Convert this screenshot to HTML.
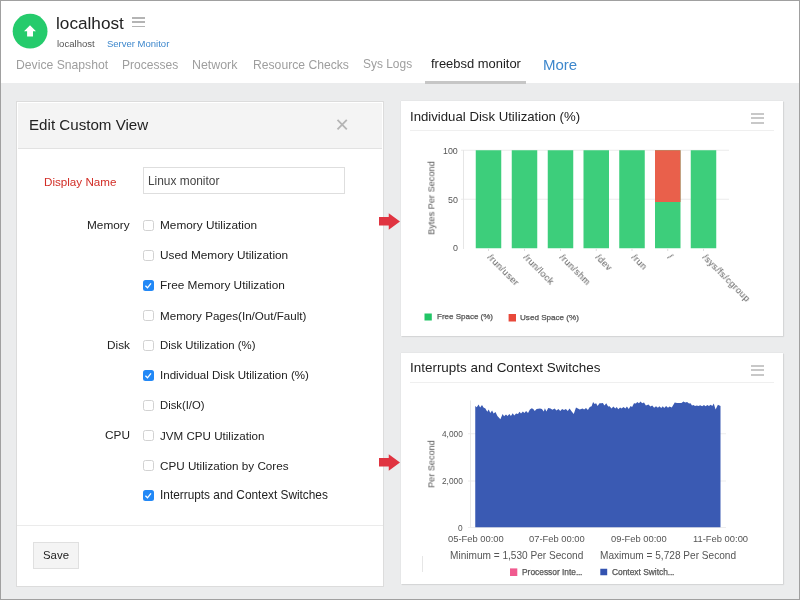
<!DOCTYPE html>
<html><head><meta charset="utf-8">
<style>
*{margin:0;padding:0;box-sizing:border-box}
html,body{width:800px;height:600px;overflow:hidden;background:#fff}
body{position:relative;font-family:"Liberation Sans",sans-serif;color:#222}
.a{position:absolute;white-space:nowrap}
.t{position:absolute;white-space:nowrap;line-height:1;will-change:transform}
#frame{position:absolute;left:0;top:0;width:800px;height:600px;border:1px solid #a0a0a0;z-index:50;pointer-events:none}
#bg{position:absolute;left:0;top:83px;width:800px;height:517px;background:#ebeced}
.cb{position:absolute;left:143px;width:11px;height:11px;border:1px solid #d2d2d2;border-radius:2.5px;background:#fff}
.cb.on{background:#2a8bf2;border-color:#2a8bf2}
.lbl{position:absolute;font-size:11.8px;line-height:1;color:#222;white-space:nowrap;will-change:transform}
</style></head><body>
<div id="frame"></div>
<!-- header -->
<svg class="a" style="left:0;top:0" width="60" height="60">
 <circle cx="30.1" cy="31.2" r="17.4" fill="#25cb6c"/>
 <path d="M30 25.2 L36 31.2 L33 31.2 L33 36.6 L27.1 36.6 L27.1 31.2 L24 31.2 Z" fill="#fff"/>
</svg>
<div class="t" style="left:56.3px;top:14.6px;font-size:17.2px;color:#222">localhost</div>
<div class="a" style="left:132px;top:17px;width:12.6px;height:1.6px;background:#b4b4b4"></div>
<div class="a" style="left:132px;top:21.2px;width:12.6px;height:1.6px;background:#b4b4b4"></div>
<div class="a" style="left:132px;top:25.5px;width:12.6px;height:1.6px;background:#b4b4b4"></div>
<div class="t" style="left:56.5px;top:38.9px;font-size:9.55px;color:#555">localhost</div>
<div class="t" style="left:106.5px;top:38.9px;font-size:9.5px;color:#3d87cc">Server Monitor</div>
<div class="t" style="left:16px;top:58.9px;font-size:12.2px;color:#9e9e9e">Device Snapshot</div>
<div class="t" style="left:121.6px;top:58.9px;font-size:12.05px;color:#9e9e9e">Processes</div>
<div class="t" style="left:192.3px;top:58.9px;font-size:12.4px;color:#9e9e9e">Network</div>
<div class="t" style="left:252.6px;top:58.9px;font-size:12.16px;color:#9e9e9e">Resource Checks</div>
<div class="t" style="left:363px;top:58.9px;font-size:11.95px;color:#9e9e9e">Sys Logs</div>
<div class="t" style="left:430.7px;top:58.2px;font-size:12.95px;color:#222">freebsd monitor</div>
<div class="t" style="left:542.6px;top:57.3px;font-size:15px;color:#3d87cc">More</div>
<div class="a" style="left:425px;top:81px;width:101px;height:3px;background:#c6c6c6;z-index:2"></div>
<div id="bg"></div>

<!-- left panel -->
<div class="a" style="left:16px;top:101px;width:368px;height:486px;background:#fff;border:1px solid #dcdcdc"></div>
<div class="a" style="left:18px;top:103px;width:364px;height:46px;background:#f4f4f4;border-bottom:1px solid #e2e2e2"></div>
<div class="t" style="left:28.6px;top:117.3px;font-size:15.15px;color:#222">Edit Custom View</div>
<svg class="a" style="left:330px;top:112px" width="24" height="24"><path d="M7.5 7.9 L16.8 17.3 M16.8 7.9 L7.5 17.3" stroke="#b5b5b5" stroke-width="1.8"/></svg>
<div class="t" style="left:44.2px;top:176px;font-size:11.65px;color:#d22d26">Display Name</div>
<div class="a" style="left:143px;top:167px;width:202px;height:27px;border:1px solid #dedede;background:#fff"></div>
<div class="t" style="left:147.8px;top:176px;font-size:11.9px;color:#444">Linux monitor</div>
<div class="a" style="left:17px;top:525px;width:366px;height:1px;background:#ebebeb"></div>
<div class="a" style="left:33px;top:542px;width:45.5px;height:27px;background:#f4f4f4;border:1px solid #e0e0e0"></div>
<div class="t" style="left:43px;top:550.1px;font-size:11.4px;color:#222">Save</div>
<div class="lbl" style="right:670.2px;top:219.8px">Memory</div>
<div class="cb" style="top:220.2px"></div>
<div class="lbl" style="left:159.5px;top:219.79px;font-size:11.81px">Memory Utilization</div>
<div class="cb" style="top:250.2px"></div>
<div class="lbl" style="left:159.5px;top:249.77px;font-size:11.83px">Used Memory Utilization</div>
<svg class="a" style="left:143px;top:280.2px" width="11" height="11"><rect x="0" y="0" width="11" height="11" rx="2.5" fill="#2288f6"/><path d="M2.4 5.8 L4.5 7.8 L8 3.4" stroke="#fff" stroke-width="1.3" fill="none"/></svg>
<div class="lbl" style="left:159.5px;top:279.77px;font-size:11.83px">Free Memory Utilization</div>
<div class="cb" style="top:310.2px"></div>
<div class="lbl" style="left:159.5px;top:309.96px;font-size:11.61px">Memory Pages(In/Out/Fault)</div>
<div class="lbl" style="right:670.2px;top:339.8px">Disk</div>
<div class="cb" style="top:340.2px"></div>
<div class="lbl" style="left:159.5px;top:340.16px;font-size:11.38px">Disk Utilization (%)</div>
<svg class="a" style="left:143px;top:370.2px" width="11" height="11"><rect x="0" y="0" width="11" height="11" rx="2.5" fill="#2288f6"/><path d="M2.4 5.8 L4.5 7.8 L8 3.4" stroke="#fff" stroke-width="1.3" fill="none"/></svg>
<div class="lbl" style="left:159.5px;top:370.00px;font-size:11.56px">Individual Disk Utilization (%)</div>
<div class="cb" style="top:400.2px"></div>
<div class="lbl" style="left:159.5px;top:400.24px;font-size:11.28px">Disk(I/O)</div>
<div class="lbl" style="right:670.2px;top:429.8px">CPU</div>
<div class="cb" style="top:430.2px"></div>
<div class="lbl" style="left:159.5px;top:429.95px;font-size:11.62px">JVM CPU Utilization</div>
<div class="cb" style="top:460.2px"></div>
<div class="lbl" style="left:159.5px;top:459.89px;font-size:11.69px">CPU Utilization by Cores</div>
<svg class="a" style="left:143px;top:490.2px" width="11" height="11"><rect x="0" y="0" width="11" height="11" rx="2.5" fill="#2288f6"/><path d="M2.4 5.8 L4.5 7.8 L8 3.4" stroke="#fff" stroke-width="1.3" fill="none"/></svg>
<div class="lbl" style="left:159.5px;top:489.76px;font-size:11.85px">Interrupts and Context Switches</div>

<!-- arrows -->
<svg class="a" style="left:370px;top:205px" width="40" height="30"><path d="M9 12 L18.75 12 L18.75 8.25 L30 16.5 L18.75 24.75 L18.75 20.5 L9 20.5 Z" fill="#e03441"/></svg>
<svg class="a" style="left:370px;top:446px" width="40" height="30"><path d="M9 12 L18.75 12 L18.75 8.25 L30 16.5 L18.75 24.75 L18.75 20.5 L9 20.5 Z" fill="#e03441"/></svg>
<!-- top chart panel -->
<div class="a" style="left:401px;top:101px;width:382px;height:235px;background:#fff;box-shadow:0 0 1px rgba(0,0,0,.12),1px 1px 1px rgba(0,0,0,.07)"></div>
<div class="t" style="left:409.8px;top:109.6px;font-size:13.2px;color:#222">Individual Disk Utilization (%)</div>
<div class="a" style="left:410px;top:130px;width:364px;height:1px;background:#efefef"></div>
<div class="a" style="left:751px;top:112.7px;width:13.4px;height:2px;background:#c8c8c8"></div>
<div class="a" style="left:751px;top:117.2px;width:13.4px;height:2px;background:#c8c8c8"></div>
<div class="a" style="left:751px;top:121.7px;width:13.4px;height:2px;background:#c8c8c8"></div>
<!-- bottom chart panel -->
<div class="a" style="left:401px;top:353px;width:382px;height:231px;background:#fff;box-shadow:0 0 1px rgba(0,0,0,.12),1px 1px 1px rgba(0,0,0,.07)"></div>
<div class="t" style="left:409.8px;top:361.2px;font-size:13.45px;color:#222">Interrupts and Context Switches</div>
<div class="a" style="left:410px;top:382px;width:364px;height:1px;background:#efefef"></div>
<div class="a" style="left:751px;top:364.9px;width:13.4px;height:2px;background:#c8c8c8"></div>
<div class="a" style="left:751px;top:369.3px;width:13.4px;height:2px;background:#c8c8c8"></div>
<div class="a" style="left:751px;top:373.8px;width:13.4px;height:2px;background:#c8c8c8"></div>
<svg class="a" style="left:0;top:0" width="800" height="600"><rect x="461" y="149.75" width="268" height="1" fill="#ececec"/><rect x="461" y="198.75" width="268" height="1" fill="#ececec"/><rect x="463" y="150" width="1" height="99" fill="#e6e6e6"/><rect x="475.75" y="150.25" width="25.5" height="98" fill="#3dce7b"/><rect x="488.0" y="248.5" width="1" height="2.5" fill="#ddd"/><rect x="511.75" y="150.25" width="25.5" height="98" fill="#3dce7b"/><rect x="524.0" y="248.5" width="1" height="2.5" fill="#ddd"/><rect x="547.75" y="150.25" width="25.5" height="98" fill="#3dce7b"/><rect x="560.0" y="248.5" width="1" height="2.5" fill="#ddd"/><rect x="583.5" y="150.25" width="25.5" height="98" fill="#3dce7b"/><rect x="595.75" y="248.5" width="1" height="2.5" fill="#ddd"/><rect x="619.25" y="150.25" width="25.5" height="98" fill="#3dce7b"/><rect x="631.5" y="248.5" width="1" height="2.5" fill="#ddd"/><rect x="655" y="150.25" width="25.5" height="98" fill="#3dce7b"/><rect x="667.25" y="248.5" width="1" height="2.5" fill="#ddd"/><rect x="690.75" y="150.25" width="25.5" height="98" fill="#3dce7b"/><rect x="703.0" y="248.5" width="1" height="2.5" fill="#ddd"/><rect x="655" y="150.25" width="25.5" height="51.75" fill="#e9604b"/><rect x="424.5" y="313.5" width="7.3" height="7" fill="#22c566"/><rect x="508.6" y="314" width="7.4" height="7.5" fill="#e8483a"/></svg>
<div class="t" style="right:342.5px;top:146.5px;font-size:8.9px;color:#555">100</div>
<div class="t" style="right:342.5px;top:195.5px;font-size:8.9px;color:#555">50</div>
<div class="t" style="right:342.5px;top:244.3px;font-size:8.9px;color:#555">0</div>
<div class="t" style="left:432.25px;top:198px;font-size:9.2px;color:#555;transform:translate(-50%,-50%) rotate(-90deg)">Bytes Per Second</div>
<div class="t" style="-webkit-text-stroke:0.25px #555;left:436.7px;top:313.2px;font-size:8px;color:#555">Free Space (%)</div>
<div class="t" style="-webkit-text-stroke:0.25px #555;left:520.4px;top:313.6px;font-size:8.1px;color:#555">Used Space (%)</div>
<div class="t" style="left:492.25px;top:253.3px;font-size:9.3px;letter-spacing:0.4px;color:#555;transform-origin:0 0;transform:rotate(45deg);will-change:transform">/run/user</div>
<div class="t" style="left:528.25px;top:253.3px;font-size:9.3px;letter-spacing:0.4px;color:#555;transform-origin:0 0;transform:rotate(45deg);will-change:transform">/run/lock</div>
<div class="t" style="left:564.25px;top:253.3px;font-size:9.3px;letter-spacing:0.4px;color:#555;transform-origin:0 0;transform:rotate(45deg);will-change:transform">/run/shm</div>
<div class="t" style="left:600.00px;top:253.3px;font-size:9.3px;letter-spacing:0.4px;color:#555;transform-origin:0 0;transform:rotate(45deg);will-change:transform">/dev</div>
<div class="t" style="left:635.75px;top:253.3px;font-size:9.3px;letter-spacing:0.4px;color:#555;transform-origin:0 0;transform:rotate(45deg);will-change:transform">/run</div>
<div class="t" style="left:671.50px;top:253.3px;font-size:9.3px;letter-spacing:0.4px;color:#555;transform-origin:0 0;transform:rotate(45deg);will-change:transform">/</div>
<div class="t" style="left:707.25px;top:253.3px;font-size:9.3px;letter-spacing:0.4px;color:#555;transform-origin:0 0;transform:rotate(45deg);will-change:transform">/sys/fs/cgroup</div>
<svg class="a" style="left:0;top:0" width="800" height="600"><rect x="468" y="433.25" width="258" height="1" fill="#ededed"/><rect x="468" y="480.5" width="258" height="1" fill="#ededed"/><rect x="470" y="400.5" width="1" height="127.5" fill="#e8e8e8"/><rect x="468" y="527" width="258" height="1" fill="#ededed"/><polygon points="475.25,527.3 475.25,406.1 476.75,407.25 478.6,404.6 480.1,407.6 482,405 483.5,407.6 485.4,408.4 487.25,411.75 488.75,409.5 490.25,412.9 492.1,410.6 493.6,413.6 495.5,412.1 497.4,415.9 500.4,419.25 502.6,414 504.1,416.25 506,414.4 507.5,415.9 509.4,414 510.9,415.9 512.75,413.25 514.25,415.5 516.1,413.6 518,414 519.5,411.75 521,413.6 522.9,411.4 524.4,412.9 526.1,410.9 528,413.1 529.9,409.4 531.75,408.25 533.25,409 534.75,410.9 536.6,409 540,408.6 541.9,409 543.75,411.6 544.9,408.25 546.4,411.6 548.25,407.9 550.5,408.6 552.4,409.75 554.6,408.6 556.5,410.5 558.4,409 560.25,410.9 562.1,409 564,410.1 565.9,409 567.75,410.9 569.6,408.6 571.5,411.25 573.75,413.9 576,407.5 577.9,408.6 579.75,409.4 582.6,408.5 584.1,409.6 586,408.1 587.9,410 589.75,407 591.6,406.25 593.1,402.1 594.6,404 596.1,403.25 597.6,405.9 599.5,403.25 601.4,403.25 602.9,402.9 604.4,405.5 606.25,403.25 608.1,406.6 609.6,406.25 611.5,408.5 613.4,406.6 615.25,408.5 616.75,407 618.25,409.25 620.1,407.4 621.6,408.5 623.5,407 625.4,408.5 626.9,406.6 628.75,408.9 630.6,405.9 632.1,407 634,403.25 635.9,403.6 637.3,401.9 638.9,403.25 640.6,401.4 642.1,403.25 644,402.5 645.9,405.5 648.5,404.4 650.4,406.6 652.25,405.5 654.1,407.75 656,406.25 657.9,407.75 659.4,406.25 661.25,408.1 662.75,406.25 664.25,408.1 666.1,405.9 668,407.75 669.5,406.6 671.75,407.4 674.75,402.5 677,402.9 681.5,402.9 683.4,401.4 685.25,402.5 687.1,402.1 689,403.6 690.5,403.25 692,405.5 693.5,405.1 695,405.9 696.9,405.5 698.4,405.9 700.25,405.35 702.1,406.25 704,405.1 705.5,406.25 707.4,405.1 708.9,405.9 710.75,404.75 712.25,405.9 713.75,403.6 715.6,409.6 717.9,404.75 720.5,405.9 720.5,527.3" fill="#3a5ab3"/><rect x="510" y="568.4" width="7.3" height="7.6" fill="#f05a8f"/><rect x="600.3" y="568.75" width="6.9" height="6.5" fill="#3353b0"/><rect x="422" y="556" width="1" height="16" fill="#e6e6e6"/></svg>
<div class="t" style="right:337px;top:430.3px;font-size:8.3px;color:#555">4,000</div>
<div class="t" style="right:337px;top:477px;font-size:8.3px;color:#555">2,000</div>
<div class="t" style="right:337px;top:524.2px;font-size:8.3px;color:#555">0</div>
<div class="t" style="left:432px;top:463.6px;font-size:9.15px;color:#555;transform:translate(-50%,-50%) rotate(-90deg)">Per Second</div>
<div class="t" style="left:447.5px;top:533.9px;font-size:9.4px;color:#555">05-Feb 00:00</div>
<div class="t" style="left:528.6px;top:533.9px;font-size:9.4px;color:#555">07-Feb 00:00</div>
<div class="t" style="left:611px;top:533.9px;font-size:9.4px;color:#555">09-Feb 00:00</div>
<div class="t" style="left:693px;top:533.9px;font-size:9.4px;color:#555">11-Feb 00:00</div>
<div class="t" style="left:449.7px;top:551px;font-size:10.1px;color:#555">Minimum = 1,530 Per Second</div>
<div class="t" style="left:599.5px;top:550.9px;font-size:10.1px;color:#555">Maximum = 5,728 Per Second</div>
<div class="t" style="-webkit-text-stroke:0.25px #555;left:522px;top:567.6px;font-size:8.4px;color:#555">Processor Inte<span style="letter-spacing:-0.3px">...</span></div>
<div class="t" style="-webkit-text-stroke:0.25px #555;left:611.9px;top:567.6px;font-size:8.4px;color:#555">Context Switch<span style="letter-spacing:-0.3px">...</span></div>
</body></html>
